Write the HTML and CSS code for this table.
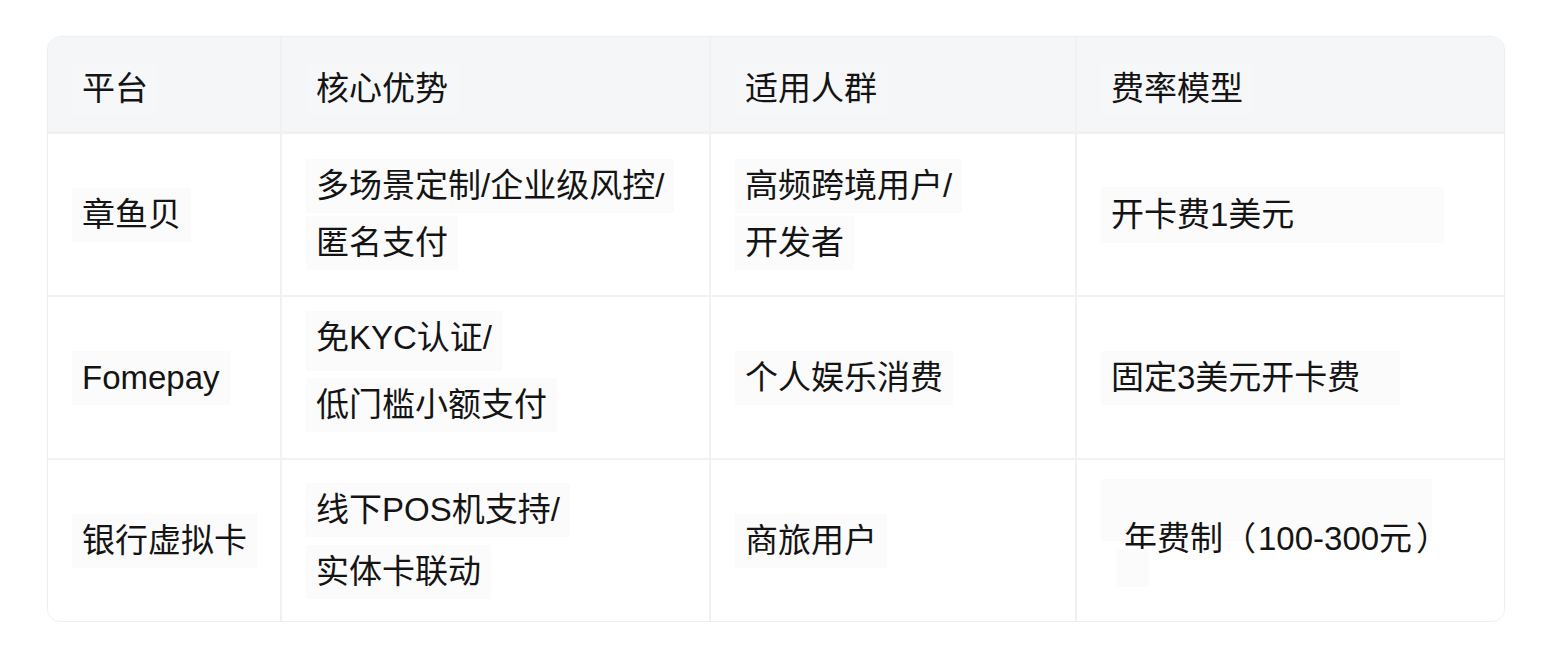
FILE: index.html
```html
<!DOCTYPE html>
<html lang="zh-CN">
<head>
<meta charset="utf-8">
<title>平台对比</title>
<link rel="stylesheet" href="styles.css">
</head>
<body>
<div class="table">
  <div class="cell head"><span class="t">平台</span></div>
  <div class="cell head"><span class="t">核心优势</span></div>
  <div class="cell head"><span class="t">适用人群</span></div>
  <div class="cell head last"><span class="t">费率模型</span></div>

  <div class="cell"><span class="t">章鱼贝</span></div>
  <div class="cell"><span class="t">多场景定制/企业级风控/</span><span class="t">匿名支付</span></div>
  <div class="cell"><span class="t">高频跨境用户/</span><span class="t">开发者</span></div>
  <div class="cell last"><span class="t wide">开卡费1美元</span></div>

  <div class="cell"><span class="t">Fomepay</span></div>
  <div class="cell loose"><span class="t tall">免KYC认证/</span><span class="t">低门槛小额支付</span></div>
  <div class="cell"><span class="t">个人娱乐消费</span></div>
  <div class="cell last"><span class="t roomy">固定3美元开卡费</span></div>

  <div class="cell bottom"><span class="t">银行虚拟卡</span></div>
  <div class="cell bottom mid"><span class="t">线下POS机支持/</span><span class="t">实体卡联动</span></div>
  <div class="cell bottom"><span class="t">商旅用户</span></div>
  <div class="cell bottom last top"><span class="t annual">年费制<span class="pl">（</span>100-300元<span class="pr">）</span></span><span class="blip"></span></div>
</div>
</body>
</html>
```

FILE: styles.css
```css
html, body {
  margin: 0;
  padding: 0;
  background: #ffffff;
}

body {
  font-family: "Liberation Sans", "Noto Sans CJK SC", sans-serif;
  color: #141414;
}

.table {
  box-sizing: border-box;
  width: 1458px;
  margin: 36px 0 0 47px;
  border: 1px solid #eceef1;
  border-radius: 14px;
  overflow: hidden;
  display: grid;
  grid-template-columns: 234px 429px 366px 427px;
  grid-template-rows: 97px 163px 163px 161px;
  box-shadow: 0 0 2px rgba(0, 0, 0, 0.04);
}

.cell {
  box-sizing: border-box;
  border-right: 2px solid #eff1f3;
  border-bottom: 2px solid #eff1f3;
  display: flex;
  flex-direction: column;
  justify-content: center;
  align-items: flex-start;
  gap: 3px;
  padding: 0 0 0 24px;
  background: #ffffff;
}

.cell.last {
  border-right: none;
}

.cell.bottom {
  border-bottom: none;
}

.cell.head {
  background: #f5f6f8;
  border-bottom-width: 3px;
  padding-top: 10px;
}

.cell.loose {
  gap: 7px;
  padding-bottom: 12px;
}

.cell.mid {
  gap: 8px;
}

.cell.top {
  justify-content: flex-start;
  padding-top: 19px;
  gap: 0;
}

.t {
  display: block;
  font-size: 33px;
  line-height: 54px;
  padding: 0 10px;
  background: #fbfbfb;
  white-space: nowrap;
}

.head .t {
  background: #f6f7f8;
}

.t.tall {
  padding-bottom: 6px;
}

.t.wide {
  padding-right: 150px;
  line-height: 56px;
}

.t.roomy {
  padding-right: 40px;
}

.t.annual {
  box-sizing: border-box;
  width: 331px;
  line-height: 40px;
  padding: 40px 0 0 23px;
  background: linear-gradient(#fbfbfb 0, #fbfbfb 62px, transparent 62px);
}

.pl {
  margin-right: 2px;
}

.pr {
  margin-left: 4px;
}

.blip {
  display: block;
  width: 32px;
  height: 38px;
  margin: -10px 0 0 16px;
  background: #fbfbfb;
}
```
